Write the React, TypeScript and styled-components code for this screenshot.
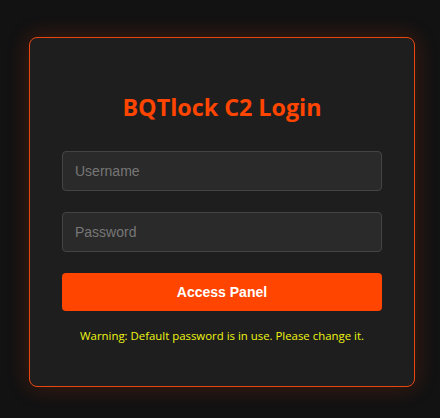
import styled, { createGlobalStyle } from 'styled-components'

const GlobalStyle = createGlobalStyle`
  html, body {
    margin: 0;
    padding: 0;
    background: #121212;
    font-family: "Liberation Sans", Arial, sans-serif;
  }
`

const App: React.FC = () => {
  return (
    <>
      <GlobalStyle />
      <Page>
        <Card>
          <Title>BQTlock C2 Login</Title>
          <Input type="text" placeholder="Username" />
          <Input type="password" placeholder="Password" />
          <SubmitButton>Access Panel</SubmitButton>
          <Warning>Warning: Default password is in use. Please change it.</Warning>
        </Card>
      </Page>
    </>
  )
}

export default App

const Page = styled.div`
  width: 440px;
  height: 418px;
  display: flex;
  padding: 37px 0 0 29px;
  box-sizing: border-box;
`

const Card = styled.div`
  width: 386px;
  height: 350px;
  box-sizing: border-box;
  background-color: #1e1e1e;
  border: 1px solid #e8480f;
  border-radius: 8px;
  box-shadow: 0 0 22px rgba(255, 69, 0, 0.22);
  padding: 0 32px;
  display: flex;
  flex-direction: column;
`

const Title = styled.h2`
  margin: 55px 0 30px;
  height: 28px;
  line-height: 28px;
  text-align: center;
  color: #ff4500;
  font-family: "Open Sans", sans-serif;
  font-size: 23.3px;
  font-weight: 700;
`

const Input = styled.input`
  width: 100%;
  height: 40px;
  box-sizing: border-box;
  margin-bottom: 21px;
  padding: 0 12px;
  background-color: #2a2a2a;
  border: 1px solid #444;
  border-radius: 4px;
  color: #eee;
  font-family: "Liberation Sans", Arial, sans-serif;
  font-size: 14px;
  outline: none;

  &::placeholder {
    color: #777;
  }
`

const SubmitButton = styled.button`
  width: 100%;
  height: 38px;
  background-color: #ff4500;
  color: #fff;
  border: none;
  border-radius: 4px;
  font-family: "Liberation Sans", Arial, sans-serif;
  font-size: 14px;
  font-weight: 700;
  cursor: pointer;
`

const Warning = styled.p`
  margin: 17px 0 0;
  line-height: 16px;
  text-align: center;
  color: #eef512;
  font-family: "Open Sans", sans-serif;
  font-size: 11.4px;
`
